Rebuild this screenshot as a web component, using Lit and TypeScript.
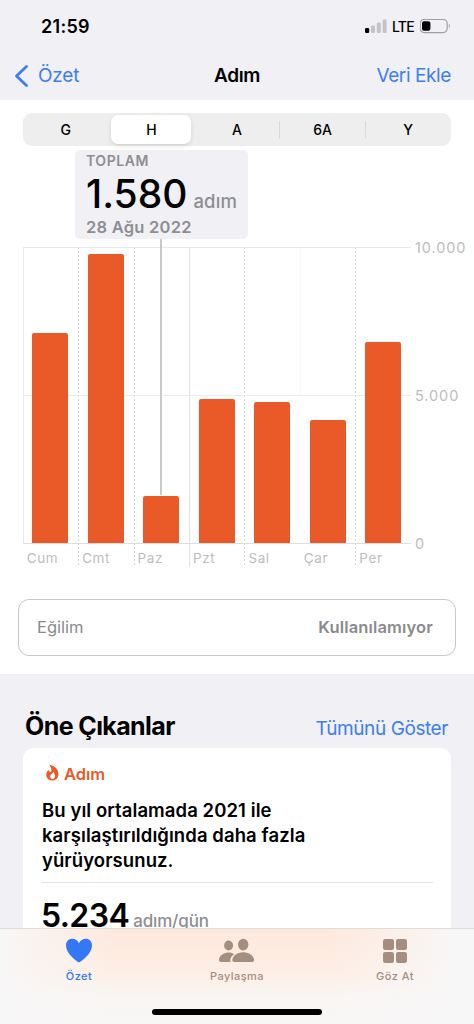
import { LitElement, html, css } from 'lit';
import { customElement, property, state } from 'lit/decorators.js';
import { classMap } from 'lit/directives/class-map.js';
import { styleMap } from 'lit/directives/style-map.js';

interface Day {
  label: string;
  steps: number;
  line: string;
}

const DAYS: Day[] = [
  { label: 'Cum', steps: 7110, line: 'edge' },
  { label: 'Cmt', steps: 9780, line: 'dashed' },
  { label: 'Paz', steps: 1580, line: 'dashed' },
  { label: 'Pzt', steps: 4880, line: 'solid' },
  { label: 'Sal', steps: 4750, line: 'dashed' },
  { label: 'Çar', steps: 4140, line: 'faint' },
  { label: 'Per', steps: 6780, line: 'dashed' },
];

const MAX_STEPS = 10000;

@customElement('status-bar')
export class StatusBar extends LitElement {
  static styles = css`
    :host {
      display: flex;
      align-items: center;
      justify-content: space-between;
      height: 52px;
      padding: 0 23px 0 41px;
      box-sizing: border-box;
    }

    .time {
      font-size: 18px;
      font-weight: 600;
      letter-spacing: 0.3px;
    }

    .right {
      display: flex;
      align-items: center;
    }

    .network {
      font-size: 14px;
      font-weight: 500;
      letter-spacing: -0.7px;
      margin: 1px 6px 0 5px;
    }

    svg {
      display: block;
    }
  `;

  render() {
    return html`
      <span class="time">21:59</span>
      <div class="right">
        <svg width="22" height="14" viewBox="0 0 22 14">
          <rect x="0" y="9" width="4.2" height="5" rx="1.3" fill="#000" />
          <rect x="6" y="6.5" width="4" height="7.5" rx="1.2" fill="#c4c4c8" />
          <rect x="11.8" y="3.5" width="4" height="10.5" rx="1.2" fill="#c4c4c8" />
          <rect x="17.6" y="0.5" width="4" height="13.5" rx="1.2" fill="#c4c4c8" />
        </svg>
        <span class="network">LTE</span>
        <svg width="31" height="15" viewBox="0 0 31 15">
          <rect x="0.2" y="0.4" width="27" height="13.2" rx="4" fill="none" stroke="#a0a0a4" stroke-width="1.2" />
          <rect x="2" y="2.200" width="8.4" height="9.6" rx="2" fill="#000" />
          <path d="M28.800 4.800c1.4.6 1.4 3.8 0 4.4z" fill="#a0a0a4" />
        </svg>
      </div>
    `;
  }
}

@customElement('range-picker')
export class RangePicker extends LitElement {
  static styles = css`
    :host {
      display: flex;
      height: 33px;
      border-radius: 9px;
      background: #eeeeef;
    }

    .segment {
      flex: 1;
      display: flex;
      align-items: center;
      justify-content: center;
      position: relative;
      font-size: 14px;
      font-weight: 500;
      cursor: pointer;
    }

    .segment.divided::before {
      content: '';
      position: absolute;
      left: -0.5px;
      top: 8px;
      width: 1px;
      height: 17px;
      background: #d8d8da;
    }

    .label {
      display: flex;
      align-items: center;
      justify-content: center;
      width: 80px;
      height: 29px;
      border-radius: 7px;
    }

    .selected .label {
      background: #fff;
      box-shadow: 0 2px 5px rgba(0, 0, 0, 0.1), 0 1px 1px rgba(0, 0, 0, 0.04);
    }
  `;

  @state() selected = 1;

  render() {
    return ['G', 'H', 'A', '6A', 'Y'].map((label, i) => html`
      <div
        class=${classMap({
          segment: true,
          selected: i === this.selected,
          divided: i > 0 && i !== this.selected && i - 1 !== this.selected,
        })}
        @click=${() => { this.selected = i; }}
      >
        <span class="label">${label}</span>
      </div>
    `);
  }
}

@customElement('step-chart')
export class StepChart extends LitElement {
  static styles = css`
    :host {
      display: grid;
      grid-template-columns: 388px 1fr;
      position: relative;
      height: 320px;
    }

    .plot {
      display: grid;
      grid-template-columns: repeat(7, 1fr);
      margin: 0 0.3px 0 -0.3px;
    }

    .day {
      display: grid;
      grid-template-rows: 297px 23px;
      background-repeat: no-repeat;
      background-size: 1px 100%;
    }

    .day.edge {
      background-image: linear-gradient(#e9e9eb, #e9e9eb);
      background-size: 1px 297px;
    }

    .day.solid {
      background-image: linear-gradient(#e2e2e4, #e2e2e4);
    }

    .day.dashed {
      background-image: repeating-linear-gradient(#d4d4d6 0 2px, transparent 2px 4px);
    }

    .day.faint {
      background-image: linear-gradient(#f8f8f9, #f8f8f9);
      background-size: 1px 148px;
    }

    .track {
      display: flex;
      flex-direction: column;
      justify-content: flex-end;
      align-items: center;
      border-top: 1px solid #e9e9eb;
      border-bottom: 1px solid #dedee0;
      background: linear-gradient(#ebebed, #ebebed) 0 147px / 100% 1px no-repeat;
    }

    .bar {
      width: 36px;
      border-radius: 2px 2px 0 0;
      background: #ea5a28;
    }

    .name {
      padding: 6px 0 0 4px;
      font-size: 13.5px;
      line-height: 17px;
      letter-spacing: 0.6px;
      color: #bdbdc0;
    }

    .axis {
      display: flex;
      flex-direction: column;
      justify-content: space-between;
      height: 314px;
      margin-top: -8px;
      padding-left: 4px;
      font-size: 14.5px;
      line-height: 18px;
      letter-spacing: 0.9px;
      color: #bdbdc0;
    }

    .callout {
      position: absolute;
      left: 52px;
      top: -97px;
      width: 173px;
      height: 89px;
      box-sizing: border-box;
      padding: 2px 0 0 11px;
      border-radius: 5px;
      background: #f1f0f5;
      color: #8e8e92;
      font-weight: 600;
      white-space: nowrap;
    }

    .callout::after {
      content: '';
      position: absolute;
      left: 85px;
      top: 89px;
      width: 2px;
      height: 256px;
      background: #c9c9cc;
    }

    .caption {
      font-size: 14px;
      line-height: 18px;
      letter-spacing: 0.55px;
    }

    .total {
      display: flex;
      align-items: baseline;
      gap: 6px;
      height: 47px;
      line-height: 47px;
      font-size: 18.5px;
    }

    .total span {
      font-weight: 500;
      letter-spacing: 0.2px;
    }

    .total strong {
      font-size: 39px;
      font-weight: 500;
      color: #000;
    }

    .date {
      font-size: 16.5px;
      line-height: 20px;
      letter-spacing: 0.25px;
    }
  `;

  @property({ attribute: false }) days: Day[] = [];

  render() {
    return html`
      <div class="plot">
        ${this.days.map((day) => html`
          <div class="day ${day.line}">
            <div class="track">
              <div class="bar" style=${styleMap({ height: `${(day.steps / MAX_STEPS) * 296}px` })}></div>
            </div>
            <span class="name">${day.label}</span>
          </div>
        `)}
      </div>
      <div class="axis">
        <span>10.000</span>
        <span>5.000</span>
        <span>0</span>
      </div>
      <div class="callout">
        <div class="caption">TOPLAM</div>
        <div class="total"><strong>1.580</strong><span>adım</span></div>
        <div class="date">28 Ağu 2022</div>
      </div>
    `;
  }
}

@customElement('highlight-card')
export class HighlightCard extends LitElement {
  static styles = css`
    :host {
      display: block;
      height: 240px;
      box-sizing: border-box;
      padding: 15px 18px 0;
      border-radius: 11px;
      background: #fff;
    }

    .kind {
      display: flex;
      align-items: center;
      gap: 5px;
      height: 22px;
      padding-left: 5px;
      font-size: 16.5px;
      font-weight: 600;
      letter-spacing: 0;
      color: #ea5a28;
    }

    .kind svg {
      margin-top: -2px;
    }

    .text {
      margin: 13px 0 0;
      padding: 0 0 9px 1px;
      border-bottom: 1px solid #e3e3e5;
      font-size: 18.5px;
      font-weight: 600;
      line-height: 25px;
      letter-spacing: 0.08px;
      white-space: nowrap;
    }

    .value {
      display: flex;
      align-items: baseline;
      gap: 4px;
      margin-top: 12px;
      line-height: 42px;
      font-size: 17px;
      font-weight: 500;
      letter-spacing: -0.15px;
      color: #8e8e92;
    }

    .value strong {
      font-size: 32px;
      font-weight: 600;
      letter-spacing: -0.6px;
      color: #000;
    }
  `;

  render() {
    return html`
      <div class="kind">
        <svg width="13" height="16" viewBox="0 0 13 16">
          <path
            fill="currentColor"
            fill-rule="evenodd"
            d="M4.3 0C8.6.8 11.2 3.4 12 6.5c1.500 5.500-1.500 9-5.800 9C2.500 15.500.3 13 .3 9.800.3 7.600 1.200 6 2.300 5.300c.5-.3.9 0 .9.5 0 .6.3 1.100.9 1.100C5.800 6.800 5.900 3.300 3.800 1.100 3.300.5 3.600-.1 4.300 0zM7 6.700c.1 2-2.800 2.700-2.800 5 0 1.300.9 2.200 2.200 2.200 1.500 0 2.600-1 2.600-2.600C9 9.400 8.300 7.600 7 6.700z"
          />
        </svg>
        <span>Adım</span>
      </div>
      <p class="text">Bu yıl ortalamada 2021 ile<br />karşılaştırıldığında daha fazla<br />yürüyorsunuz.</p>
      <div class="value"><strong>5.234</strong><span>adım/gün</span></div>
    `;
  }
}

@customElement('tab-bar')
export class TabBar extends LitElement {
  static styles = css`
    :host {
      display: flex;
      flex-direction: column;
      justify-content: space-between;
      align-items: center;
      height: 96px;
      box-sizing: border-box;
      padding-bottom: 9px;
      border-top: 1px solid #dfdcdc;
      background:
        linear-gradient(90deg, #f8f7f7 0, rgba(248, 247, 247, 0) 24%, rgba(248, 247, 247, 0) 70%, #f8f7f7 96%),
        linear-gradient(#fee8dc 0, #fdeee5 45%, #f9f6f4 72%, #f8f7f6 100%);
    }

    .tabs {
      display: grid;
      grid-template-columns: repeat(3, 1fr);
      width: 100%;
    }

    .tab {
      display: flex;
      flex-direction: column;
      align-items: center;
      padding-top: 7px;
      font-size: 11px;
      font-weight: 500;
      line-height: 14px;
      letter-spacing: 0.45px;
      color: #a58d80;
    }

    .tab svg {
      display: block;
      margin-bottom: 5px;
    }

    .tab.active {
      color: #3478f6;
    }

    .home {
      width: 170px;
      height: 6px;
      border-radius: 3px;
      background: #000;
    }
  `;

  render() {
    return html`
      <div class="tabs">
        <div class="tab active">
          <svg width="28" height="28" viewBox="0 0 28 28" fill="currentColor">
            <path d="M14 26.500C11.500 25.300 1 17.800 1 9.600 1 5.500 3.700 2.800 7.300 2.800c3 0 5.400 1.700 6.700 4.400 1.300-2.700 3.700-4.400 6.700-4.400 3.600 0 6.300 2.700 6.300 6.800 0 8.200-10.500 15.700-13 16.900z" />
          </svg>
          <span>Özet</span>
        </div>
        <div class="tab">
          <svg width="38" height="28" viewBox="0 0 38 28" fill="currentColor">
            <ellipse cx="10.600" cy="9.500" rx="4.500" ry="5" />
            <path d="M3.200 26C1.700 26 1 25.200 1 24c0-3.500 3.800-7.400 9.600-7.400 2.200 0 4.100.6 5.500 1.500-2.300 1.700-3.900 4.200-3.800 6.400 0 .6.1 1.100.4 1.500z" />
            <ellipse cx="25.200" cy="8.600" rx="5.200" ry="5.800" />
            <path d="M16.500 26c-1.500 0-2.200-.7-2.200-1.900 0-3.600 4.400-7.900 10.900-7.900s10.900 4.300 10.900 7.900c0 1.200-.8 1.900-2.300 1.900z" />
          </svg>
          <span>Paylaşma</span>
        </div>
        <div class="tab">
          <svg width="26" height="28" viewBox="0 0 26 28" fill="currentColor">
            <rect x="1" y="3" width="11" height="11" rx="2.200" />
            <rect x="14" y="3" width="11" height="11" rx="2.200" />
            <rect x="1" y="16" width="11" height="11" rx="2.200" />
            <rect x="14" y="16" width="11" height="11" rx="2.200" />
          </svg>
          <span>Göz At</span>
        </div>
      </div>
      <div class="home"></div>
    `;
  }
}

@customElement('app-root')
export class AppRoot extends LitElement {
  static styles = css`
    :host {
      display: flex;
      flex-direction: column;
      height: 1024px;
      overflow: hidden;
      background: #f1f0f5;
      color: #000;
      font-family: Inter, 'Liberation Sans', sans-serif;
    }

    header {
      flex: none;
      height: 100px;
    }

    .nav {
      display: grid;
      grid-template-columns: 1fr auto 1fr;
      align-items: center;
      height: 47px;
      padding: 0 14px;
      font-size: 19px;
      letter-spacing: -0.4px;
    }

    .nav h1 {
      margin: 0;
      font-size: 19px;
      font-weight: 600;
    }

    .link {
      color: #3d7ff0;
      text-align: right;
    }

    .nav .link {
      padding-right: 9px;
    }

    .back {
      display: flex;
      align-items: center;
      gap: 9px;
      color: #3d7ff0;
      letter-spacing: -0.2px;
    }

    main {
      flex: 1;
      min-height: 0;
    }

    .panel {
      height: 574px;
      box-sizing: border-box;
      padding: 13px 18px 0;
      background: #fff;
    }

    range-picker {
      margin: 0 5px;
    }

    step-chart {
      margin: 101px -18px 0 5px;
    }

    .trend {
      display: flex;
      align-items: center;
      justify-content: space-between;
      height: 57px;
      box-sizing: border-box;
      margin-top: 32px;
      padding: 0 22px 1px 18px;
      border: 1px solid #c8c8cb;
      border-radius: 11px;
      font-size: 16.5px;
      color: #8a8a8d;
    }

    .trend strong {
      font-weight: 600;
      letter-spacing: 0.15px;
    }

    .heading {
      display: flex;
      align-items: baseline;
      justify-content: space-between;
      height: 74px;
      box-sizing: border-box;
      padding: 37px 26px 0 25px;
      font-size: 19px;
      letter-spacing: -0.42px;
    }

    .heading h2 {
      margin: 0;
      font-size: 25px;
      line-height: 30px;
      font-weight: 700;
      letter-spacing: -0.6px;
    }

    highlight-card {
      margin: 0 23px;
    }

    tab-bar {
      flex: none;
      position: relative;
      z-index: 1;
    }
  `;

  render() {
    return html`
      <header>
        <status-bar></status-bar>
        <div class="nav">
          <div class="back">
            <svg width="15" height="24" viewBox="0 0 15 24" fill="none" stroke="currentColor" stroke-width="2.800" stroke-linecap="round" stroke-linejoin="round">
              <path d="M12.500 2.500L2.500 12l10 9.500" />
            </svg>
            <span>Özet</span>
          </div>
          <h1>Adım</h1>
          <span class="link">Veri Ekle</span>
        </div>
      </header>
      <main>
        <section class="panel">
          <range-picker></range-picker>
          <step-chart .days=${DAYS}></step-chart>
          <div class="trend">
            <span>Eğilim</span>
            <strong>Kullanılamıyor</strong>
          </div>
        </section>
        <section>
          <div class="heading">
            <h2>Öne Çıkanlar</h2>
            <span class="link">Tümünü Göster</span>
          </div>
          <highlight-card></highlight-card>
        </section>
      </main>
      <tab-bar></tab-bar>
    `;
  }
}
